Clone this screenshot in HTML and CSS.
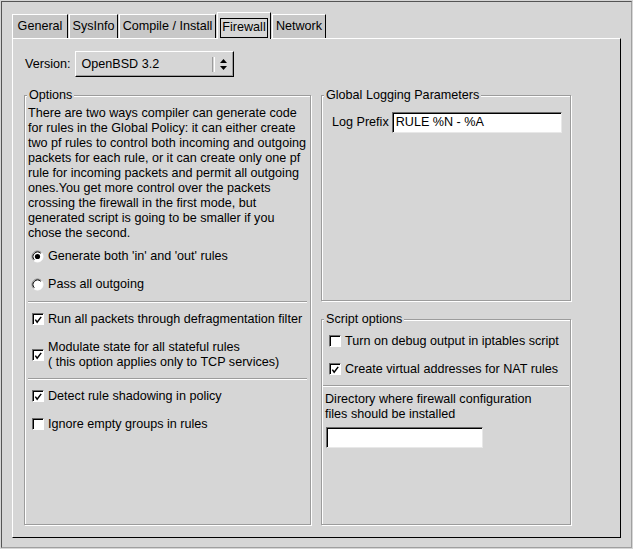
FILE: index.html
```html
<!DOCTYPE html>
<html>
<head>
<meta charset="utf-8">
<link rel="stylesheet" href="styles.css">
</head>
<body>
<div class="window">
  <div class="tabbar">
    <div class="tab t-general">General</div>
    <div class="tab t-sysinfo">SysInfo</div>
    <div class="tab t-compile">Compile / Install</div>
    <div class="tab tab-active t-firewall"><span class="focus">Firewall</span></div>
    <div class="tab t-network">Network</div>
  </div>
  <div class="pane">
    <div class="version-row">
      <span class="label">Version:</span>
      <div class="select">
        <span class="select-text">OpenBSD 3.2</span>
        <span class="select-sep"></span>
        <span class="select-arrows">
          <svg width="7" height="11" viewBox="0 0 7 11"><path d="M3.5 0 L7 4 L0 4 Z M0 7 L7 7 L3.5 11 Z" fill="#000"/></svg>
        </span>
      </div>
    </div>
    <div class="columns">
      <div class="group group-options">
        <span class="group-title">Options</span>
        <p class="desc">There are two ways compiler can generate code<br>for rules in the Global Policy: it can either create<br>two pf rules to control both incoming and outgoing<br>packets for each rule, or it can create only one pf<br>rule for incoming packets and permit all outgoing<br>ones.You get more control over the packets<br>crossing the firewall in the first mode, but<br>generated script is going to be smaller if you<br>chose the second.</p>
        <div class="row radio-row first-radio">
          <svg class="radio" width="13" height="13" viewBox="0 0 13 13"><circle cx="6.5" cy="6.5" r="5.5" fill="#fff" stroke="#fff"/><path d="M2.61 10.39 A5.5 5.5 0 0 1 10.39 2.61" fill="none" stroke="#707070"/><path d="M3.32 9.68 A4.5 4.5 0 0 1 9.68 3.32" fill="none" stroke="#000"/><circle cx="6.5" cy="6.5" r="2.6" fill="#000"/></svg>
          <span>Generate both 'in' and 'out' rules</span>
        </div>
        <div class="row radio-row">
          <svg class="radio" width="13" height="13" viewBox="0 0 13 13"><circle cx="6.5" cy="6.5" r="5.5" fill="#fff" stroke="#fff"/><path d="M2.61 10.39 A5.5 5.5 0 0 1 10.39 2.61" fill="none" stroke="#707070"/><path d="M3.32 9.68 A4.5 4.5 0 0 1 9.68 3.32" fill="none" stroke="#000"/></svg>
          <span>Pass all outgoing</span>
        </div>
        <div class="sep sep-a"></div>
        <div class="row check-row">
          <span class="box"><svg width="10" height="10" viewBox="0 0 10 10"><polyline points="1.5,4.5 3.5,7.5 8,1.5" fill="none" stroke="#000" stroke-width="1.6"/></svg></span>
          <span>Run all packets through defragmentation filter</span>
        </div>
        <div class="row check-row tall-row">
          <span class="box"><svg width="10" height="10" viewBox="0 0 10 10"><polyline points="1.5,4.5 3.5,7.5 8,1.5" fill="none" stroke="#000" stroke-width="1.6"/></svg></span>
          <span>Modulate state for all stateful rules<br>( this option applies only to TCP services)</span>
        </div>
        <div class="sep sep-b"></div>
        <div class="row check-row after-sep">
          <span class="box"><svg width="10" height="10" viewBox="0 0 10 10"><polyline points="1.5,4.5 3.5,7.5 8,1.5" fill="none" stroke="#000" stroke-width="1.6"/></svg></span>
          <span>Detect rule shadowing in policy</span>
        </div>
        <div class="row check-row">
          <span class="box"></span>
          <span>Ignore empty groups in rules</span>
        </div>
      </div>
      <div class="right-col">
        <div class="group group-logging">
          <span class="group-title">Global Logging Parameters</span>
          <div class="prefix-row">
            <span class="label">Log Prefix</span>
            <span class="input input-prefix">RULE %N - %A</span>
          </div>
        </div>
        <div class="group group-script">
          <span class="group-title">Script options</span>
          <div class="row check-row">
            <span class="box"></span>
            <span>Turn on debug output in iptables script</span>
          </div>
          <div class="row check-row">
            <span class="box"><svg width="10" height="10" viewBox="0 0 10 10"><polyline points="1.5,4.5 3.5,7.5 8,1.5" fill="none" stroke="#000" stroke-width="1.6"/></svg></span>
            <span>Create virtual addresses for NAT rules</span>
          </div>
          <div class="sep sep-wide"></div>
          <p class="dir-text">Directory where firewall configuration<br>files should be installed</p>
          <span class="input input-dir"></span>
        </div>
      </div>
    </div>
  </div>
</div>
</body>
</html>
```
FILE: styles.css
```css
html, body {
  margin: 0;
  padding: 0;
  background: #d6d6d6;
}
body {
  font-family: "Liberation Sans", Arial, sans-serif;
  font-size: 12.6px;
  line-height: 15px;
  color: #000;
}
.window {
  box-sizing: border-box;
  margin: 1px 0 0 1px;
  width: 631px;
  height: 547px;
  border: 1px solid;
  border-color: #555 #a0a0a0 #a0a0a0 #555;
  padding: 10px 0 0 10px;
}
.tabbar {
  display: flex;
  align-items: flex-end;
  gap: 1px;
  height: 26px;
}
.tab {
  box-sizing: border-box;
  height: 24px;
  display: flex;
  align-items: center;
  justify-content: center;
  background: #c8c8c8;
  border-top: 1px solid #fff;
  border-left: 1px solid #fff;
  border-right: 1px solid #000;
  white-space: nowrap;
}
.t-general { width: 56px; }
.t-sysinfo { width: 49px; }
.t-compile { width: 97px; }
.t-firewall { width: 54px; }
.t-network { width: 54px; }
.tab-active {
  height: 27px;
  margin-bottom: -1px;
  background: #d6d6d6;
  position: relative;
  z-index: 1;
  align-items: flex-start;
  padding-top: 5px;
}
.focus {
  border: 1px solid #000;
  padding: 1px 1px 3px 1px;
  line-height: 14px;
}
.pane {
  box-sizing: border-box;
  width: 609px;
  height: 500px;
  border-top: 1px solid #fff;
  border-left: 1px solid #fff;
  border-right: 1px solid #000;
  border-bottom: 1px solid #000;
  padding: 12px 0 0 11px;
}
.version-row {
  display: flex;
  align-items: center;
  gap: 4px;
  padding-left: 1px;
  height: 26px;
}
.select {
  box-sizing: border-box;
  width: 159px;
  height: 26px;
  display: flex;
  align-items: center;
  border: 1px solid;
  border-color: #fff #000 #000 #fff;
  box-shadow: inset -1px -1px 0 #9c9c9c;
}
.select-text {
  flex: 1;
  padding-left: 6px;
}
.select-sep {
  width: 1px;
  height: 15px;
  border-left: 1px solid #9c9c9c;
  border-right: 1px solid #fff;
}
.select-arrows {
  width: 18px;
  display: flex;
  justify-content: center;
  align-items: center;
}
.columns {
  display: grid;
  grid-template-columns: 287px 250px;
  column-gap: 10px;
  height: 430px;
  margin-top: 18px;
}
.right-col {
  display: flex;
  flex-direction: column;
  gap: 18px;
}
.group {
  box-sizing: border-box;
  display: flex;
  flex-direction: column;
  align-items: stretch;
  border: 1px solid #9c9c9c;
  box-shadow: 1px 1px 0 #fff, inset 1px 1px 0 #fff;
  padding: 0 3px;
}
.group-logging, .group-script {
  height: 206px;
}
.group-title {
  align-self: flex-start;
  margin: -8px 0 0 -1px;
  padding: 0 2px;
  background: #d6d6d6;
  line-height: 15px;
  white-space: nowrap;
}
.desc {
  margin: 3px 0 0 0;
  white-space: nowrap;
}
.row {
  display: flex;
  align-items: center;
  height: 28px;
  white-space: nowrap;
}
.radio-row {
  padding-left: 3px;
}
.first-radio {
  margin-top: 1px;
}
.radio {
  margin-right: 4px;
  flex: none;
}
.check-row {
  padding-left: 4px;
}
.tall-row {
  height: 44px;
}
.box {
  box-sizing: border-box;
  flex: none;
  width: 12px;
  height: 12px;
  margin-right: 4px;
  border: 1px solid;
  border-color: #6b6b6b #fff #fff #6b6b6b;
  box-shadow: inset 1px 1px 0 #000;
  background: #fff;
  display: flex;
  align-items: center;
  justify-content: center;
}
.box svg {
  margin: 1px 0 0 1px;
}
.sep {
  height: 1px;
  border-top: 1px solid #9c9c9c;
  border-bottom: 1px solid #fff;
  height: 0;
}
.sep-a {
  margin-top: 3px;
  margin-bottom: 2px;
}
.sep-b {
  margin-top: 1px;
  margin-bottom: 2px;
}
.sep-wide {
  margin: 2px -2px 0;
}
.prefix-row {
  display: flex;
  align-items: center;
  gap: 3px;
  margin-top: 9px;
  padding-left: 7px;
}
.input {
  box-sizing: border-box;
  display: block;
  height: 21px;
  background: #fff;
  border: 1px solid;
  border-color: #6b6b6b #e8e8e8 #e8e8e8 #6b6b6b;
  box-shadow: inset 1px 1px 0 #000;
  padding: 2px 0 0 3px;
  line-height: 15px;
  white-space: nowrap;
}
.input-prefix {
  width: 170px;
}
.dir-text {
  margin: 5px 0 0 0;
  white-space: nowrap;
}
.input-dir {
  width: 157px;
  margin: 5px 0 0 1px;
}
```
